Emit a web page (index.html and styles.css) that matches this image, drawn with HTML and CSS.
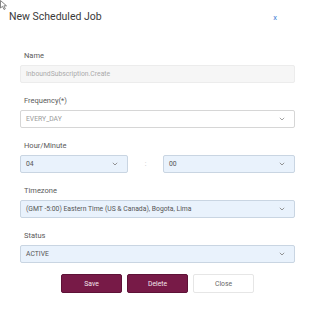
FILE: index.html
```html
<!DOCTYPE html>
<html lang="en">
<head>
  <meta charset="UTF-8">
  <meta name="viewport" content="width=device-width, initial-scale=1.0">
  <title>New Scheduled Job</title>
  <link rel="stylesheet" href="styles.css">
</head>
<body>
  <div class="dialog">
    <svg class="cursor" width="9" height="11" viewBox="0 0 9 11">
      <path d="M0.5 0.5 L0.5 8 L2.5 6.3 L4 9.5 L5.3 8.9 L3.9 5.8 L6.5 5.8 Z" fill="#fff" stroke="#666" stroke-width="0.8"/>
    </svg>
    <div class="header">
      <h1>New Scheduled Job</h1>
      <span class="close-x">x</span>
    </div>

    <div class="form">
      <div class="field">
        <label>Name</label>
        <div class="input disabled">InboundSubscription.Create</div>
      </div>

      <div class="field">
        <label>Frequency(*)</label>
        <div class="input select plain">
          <span class="muted">EVERY_DAY</span>
          <svg class="chev" width="6" height="4" viewBox="0 0 6 4"><polyline points="0.8,0.8 3,3 5.2,0.8" fill="none" stroke="#999" stroke-width="0.9"/></svg>
        </div>
      </div>

      <div class="field">
        <label>Hour/Minute</label>
        <div class="time-row">
          <div class="input select filled hour">
            <span>04</span>
            <svg class="chev" width="6" height="4" viewBox="0 0 6 4"><polyline points="0.8,0.8 3,3 5.2,0.8" fill="none" stroke="#888" stroke-width="0.9"/></svg>
          </div>
          <span class="colon">:</span>
          <div class="input select filled minute">
            <span>00</span>
            <svg class="chev" width="6" height="4" viewBox="0 0 6 4"><polyline points="0.8,0.8 3,3 5.2,0.8" fill="none" stroke="#888" stroke-width="0.9"/></svg>
          </div>
        </div>
      </div>

      <div class="field">
        <label>Timezone</label>
        <div class="input select filled">
          <span>(GMT -5:00) Eastern Time (US &amp; Canada), Bogota, Lima</span>
          <svg class="chev" width="6" height="4" viewBox="0 0 6 4"><polyline points="0.8,0.8 3,3 5.2,0.8" fill="none" stroke="#888" stroke-width="0.9"/></svg>
        </div>
      </div>

      <div class="field">
        <label>Status</label>
        <div class="input select filled">
          <span>ACTIVE</span>
          <svg class="chev" width="6" height="4" viewBox="0 0 6 4"><polyline points="0.8,0.8 3,3 5.2,0.8" fill="none" stroke="#888" stroke-width="0.9"/></svg>
        </div>
      </div>
    </div>

    <div class="actions">
      <button class="btn primary">Save</button>
      <button class="btn primary">Delete</button>
      <button class="btn light">Close</button>
    </div>
  </div>
</body>
</html>
```

FILE: styles.css
```css
body {
  margin: 0;
  background-color: #ffffff;
  font-family: Roboto, 'Liberation Sans', sans-serif;
  color: #444;
}

.dialog {
  position: relative;
  width: 314px;
  height: 312px;
}

.cursor {
  position: absolute;
  left: 0;
  top: 0;
}

.header {
  display: flex;
  justify-content: space-between;
  align-items: flex-start;
  height: 51px;
  padding: 0 37px 0 9px;
  box-sizing: border-box;
}

.header h1 {
  margin: 11px 0 0 0;
  font-size: 10.5px;
  line-height: 12px;
  font-weight: 400;
  color: #3a3a3a;
}

.close-x {
  margin-top: 13px;
  font-size: 7.5px;
  line-height: 10px;
  color: #3f7fd6;
}

.form {
  display: flex;
  flex-direction: column;
  gap: 13px;
  padding: 0 19px 0 20px;
}

.field {
  display: flex;
  flex-direction: column;
}

.field label {
  height: 10px;
  line-height: 10px;
  margin: 0 0 4px 4px;
  font-size: 7.5px;
  font-weight: 400;
  color: #5a5a5a;
}

.input {
  height: 18px;
  box-sizing: border-box;
  display: flex;
  align-items: center;
  padding: 0 9px 0 5px;
  font-size: 6.8px;
  border-radius: 2px;
  color: #555;
}

.input.disabled {
  background-color: #f6f6f6;
  border: 1px solid #ececec;
  color: #aaa;
}

.select {
  justify-content: space-between;
}

.select.plain {
  background-color: #fff;
  border: 1px solid #d6d6d6;
}

.select.filled {
  background-color: #e9f2fc;
  border: 1px solid #c9d5e2;
}

.muted {
  color: #9a9a9a;
}

.time-row {
  display: flex;
  align-items: center;
}

.hour {
  width: 108px;
}

.colon {
  width: 35px;
  text-align: center;
  font-size: 7px;
  color: #c0c0c0;
}

.minute {
  flex: 1;
}

.actions {
  display: flex;
  justify-content: center;
  gap: 5px;
  margin-top: 11px;
  padding-left: 1px;
}

.btn {
  width: 61px;
  height: 19px;
  box-sizing: border-box;
  border-radius: 2px;
  font-family: Roboto, 'Liberation Sans', sans-serif;
  font-size: 6.8px;
  padding: 0;
  cursor: pointer;
}

.btn.primary {
  background-color: #771a47;
  border: 1px solid #5e1237;
  color: #f3e6ec;
}

.btn.light {
  background-color: #fff;
  border: 1px solid #e6e6e6;
  color: #666;
}
```
